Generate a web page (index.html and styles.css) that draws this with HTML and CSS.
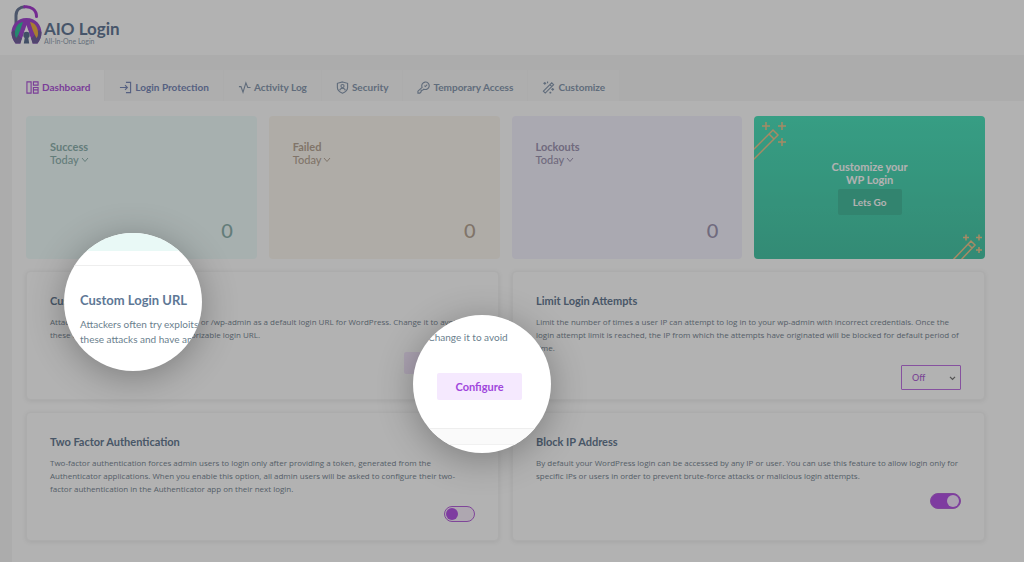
FILE: index.html
```html
<!DOCTYPE html>
<html lang="en">
<head>
<meta charset="utf-8">
<meta name="viewport" content="width=device-width, initial-scale=1">
<title>AIO Login</title>
<link rel="stylesheet" href="styles.css">
</head>
<body>
<div class="page">
  <header class="header">
    <svg class="logo" viewBox="0 0 31 40" aria-hidden="true">
      <path d="M5 19V10.500C5 5 9 2 14 1.800" fill="none" stroke="#6d7c9a" stroke-width="3"/>
      <path d="M13.500 1.800C20 1 25.500 5 25.500 11.500" fill="none" stroke="#a63ed0" stroke-width="3" stroke-linecap="round"/>
      <path d="M15.500 13C6 13 .5 20 .5 28c0 4 2 8 4 10.500h5L14 25h3l4.500 13.500h5c2-2.500 4-6.500 4-10.500 0-8-5.500-15-15-15z" fill="#a449d2"/>
      <path d="M.5 27c0 5 2 9 4 11.500h5L11 34 3 25zM30.500 27c0 5-2 9-4 11.500h-5L20 34l8-9z" fill="#75649f"/>
      <path d="M12 17c-5 1-8 5-8 11 0 2 0 3 1.500 5 3-5 4.500-10 6.500-16z" fill="#35c49e"/>
      <path d="M19 17c5 1 8 5 8 11 0 2 0 3-1.500 5-3-5-4.500-10-6.500-16z" fill="#f0b445"/>
      <path d="M15.500 20 9.500 38.500h12z" fill="#fff"/>
      <circle cx="15.500" cy="30" r="3.200" fill="#5d7192"/>
      <path d="M14 31h3l1.200 7.500h-5.400z" fill="#5d7192"/>
    </svg>
    <div class="brand"><strong class="brand-name">AIO Login</strong><span class="brand-sub">All-In-One Login</span></div>
  </header>

  <main class="main">
    <nav class="tabs" aria-label="Sections">
      <a class="tab tab-active" href="#"><svg class="icon" viewBox="0 0 14 14"><path d="M1 1h4.500v12H1zM8 1h5v3.500H8zM8 7h5v6H8zM8 9.500h5"/></svg>Dashboard</a>
      <a class="tab tab-strong" href="#"><svg class="icon" viewBox="0 0 14 14"><path d="M7.500 1.500h5v11h-5M1 7h8M6.500 4.500 9 7 6.500 9.500"/></svg>Login Protection</a>
      <a class="tab" href="#"><svg class="icon" viewBox="0 0 14 14"><path d="M1 6h2.200l2.200 6L8.500 2l2 5H13.500"/></svg>Activity Log</a>
      <a class="tab" href="#"><svg class="icon" viewBox="0 0 14 14"><path d="M7 1 12.500 2.500V7c0 3-2.500 5-5.500 6.200C4 12 1.500 10 1.500 7V2.500z"/><circle cx="7" cy="5.500" r="1.700"/><path d="M4 10c.5-3 5.500-3 6 0"/></svg>Security</a>
      <a class="tab" href="#"><svg class="icon" viewBox="0 0 14 14"><path d="M5.500 6.800a4 4 0 1 1 2 2L6 10H4.500v1.500L3 13H1v-2z"/><path d="m8 5 1 1 2-2"/></svg>Temporary Access</a>
      <a class="tab" href="#"><svg class="icon" viewBox="0 0 14 14"><path d="m1.500 11 9-9 2 2-9 9zM8.500 4l2 2M3 1v3M1.500 2.500h3M6 .5v2M11.500 7.500v3M10 9h3M9 11.500v2M8 12.500h2"/></svg>Customize</a>
    </nav>

    <div class="panel">
      <section class="stats" aria-label="Login statistics">
        <article class="stat stat-success"><h2 class="stat-title">Success</h2><button class="period" type="button">Today<svg class="chev" viewBox="0 0 8 6"><path d="m1 1 3 3.500L7 1"/></svg></button><p class="count">0</p></article>
        <article class="stat stat-failed"><h2 class="stat-title">Failed</h2><button class="period" type="button">Today<svg class="chev" viewBox="0 0 8 6"><path d="m1 1 3 3.500L7 1"/></svg></button><p class="count">0</p></article>
        <article class="stat stat-lockouts"><h2 class="stat-title">Lockouts</h2><button class="period" type="button">Today<svg class="chev" viewBox="0 0 8 6"><path d="m1 1 3 3.500L7 1"/></svg></button><p class="count">0</p></article>
        <article class="promo">
          <svg class="wand wand-top" viewBox="0 0 34 40" aria-hidden="true"><path d="m-5 33 24-24 5 5-27 27M15 13l5 5M12 1v8M8 5h8M28 1v8M24 5h8M28 17v8M24 21h8"/></svg>
          <h2 class="promo-title">Customize your<br>WP Login</h2>
          <button class="promo-button" type="button">Lets Go</button>
          <svg class="wand wand-bottom" viewBox="0 0 30 26" aria-hidden="true"><path d="m-1 28 19-20 4 4L6 29M15 11l4 4M13 1.500v6M10 4.500h6M26 1.500v6M23 4.500h6M26 14v6M23 17h6"/></svg>
        </article>
      </section>

      <section class="features" aria-label="Features">
        <article class="card"><h3 class="card-title">Custom Login URL</h3><p class="card-text">Attackers often try exploits on /wp-login or /wp-admin as a default login URL for WordPress. Change it to avoid<br>these attacks and have an easily memorizable login URL.</p><button class="configure" type="button">Configure</button></article>
        <article class="card"><h3 class="card-title"><label for="limit">Limit Login Attempts</label></h3><p class="card-text">Limit the number of times a user IP can attempt to log in to your wp-admin with incorrect credentials. Once the<br>login attempt limit is reached, the IP from which the attempts have originated will be blocked for default period of<br>time.</p>
          <span class="select-wrap"><select class="select" id="limit"><option>Off</option><option>On</option></select><svg class="select-chev" viewBox="0 0 8 6"><path d="m1 1 3 3 3-3"/></svg></span></article>
        <article class="card"><h3 class="card-title"><label for="twofactor">Two Factor Authentication</label></h3><p class="card-text">Two-factor authentication forces admin users to login only after providing a token, generated from the<br>Authenticator applications. When you enable this option, all admin users will be asked to configure their two-<br>factor authentication in the Authenticator app on their next login.</p><input class="toggle" id="twofactor" type="checkbox" role="switch"></article>
        <article class="card"><h3 class="card-title"><label for="blockip">Block IP Address</label></h3><p class="card-text">By default your WordPress login can be accessed by any IP or user. You can use this feature to allow login only for<br>specific IPs or users in order to prevent brute-force attacks or malicious login attempts.</p><input class="toggle" id="blockip" type="checkbox" role="switch" checked></article>
      </section>
    </div>
  </main>

  <div class="shade"></div>
  <div class="lens lens-title">
    <div class="lens-mint"></div>
    <div class="lens-card"><strong class="lens-heading">Custom Login URL</strong><p class="lens-text">Attackers often try exploits<br>these attacks and have an</p></div>
  </div>
  <div class="lens lens-action">
    <div class="lens-body"><p class="lens-text">Change it to avoid</p><button class="lens-button" type="button">Configure</button></div>
    <div class="lens-gap"></div>
  </div>
</div>
</body>
</html>
```
FILE: styles.css
```css
* { box-sizing: border-box; }
body { margin: 0; background: #f7f7f7; font-family: Lato, "Open Sans", sans-serif; font-size: 9px; color: #7a8995; }
h2, h3, p { margin: 0; }
button, select { font: inherit; color: inherit; border: 0; margin: 0; cursor: pointer; }
.page { position: relative; min-height: 100vh; display: flex; flex-direction: column; overflow: hidden; }

.header { display: flex; align-items: flex-start; gap: 2px; height: 55px; padding: 5px 11px; background: #fff; }
.logo { width: 31px; height: 40px; }
.brand { display: flex; flex-direction: column; padding-top: 15px; color: #667a98; }
.brand-name { font-size: 17px; line-height: 18px; }
.brand-sub { font-size: 7px; line-height: 6px; color: #939fb1; }

.main { flex: 1; display: flex; flex-direction: column; padding: 15px 0 0 12px; }
.tabs { display: flex; gap: 1px; }
.tab { display: flex; align-items: center; gap: 3px; height: 31px; padding: 3px 14px 0; background: #f9f9f9; color: #8a9bb1; font-size: 10px; font-weight: 700; text-decoration: none; }
.tab-active { background: #fff; color: #b058da; }
.tab-strong { color: #7b8bba; }
.icon { width: 13px; height: 13px; fill: none; stroke: currentColor; stroke-width: 1.2; }

.panel { flex: 1; padding: 15px 39px 22px 14px; background: #fff; }
.stats { display: grid; grid-template-columns: repeat(4, minmax(0, 1fr)); gap: 12px; }
.stat { display: flex; flex-direction: column; align-items: flex-start; height: 143px; padding: 24px 24px 15px; border-radius: 4px; }
.stat-success { background: #f0fcfb; color: #8fb3af; }
.stat-failed { background: #fbf7f0; color: #b8a797; }
.stat-lockouts { background: #f4f2fe; color: #a198b4; }
.stat-title { font-size: 11px; line-height: 13px; font-weight: 700; }
.period { display: flex; align-items: center; gap: 2px; padding: 0; background: none; font-size: 11px; line-height: 13px; font-weight: 500; }
.chev { width: 8px; height: 6px; fill: none; stroke: currentColor; }
.count { align-self: flex-end; margin-top: auto; font-size: 20px; line-height: 28px; font-weight: 500; }
.promo { position: relative; display: flex; flex-direction: column; align-items: center; justify-content: center; gap: 3px; height: 143px; border-radius: 4px; overflow: hidden; background: linear-gradient(#4fe2bd, #4ac7a8); color: #fff; text-align: center; }
.promo-title { font-size: 11px; line-height: 13px; }
.promo-button { width: 64px; height: 26px; border-radius: 2px; background: #48bd9f; font-size: 10px; font-weight: 700; }
.wand { position: absolute; fill: none; stroke: #efc690; stroke-width: 1.5; }
.wand-top { top: 5px; left: 0; width: 34px; height: 40px; }
.wand-bottom { right: 2px; bottom: 0; width: 30px; height: 26px; }

.features { display: grid; grid-template-columns: repeat(2, minmax(0, 1fr)); gap: 12px 13px; margin-top: 12px; }
.card { display: flex; flex-direction: column; align-items: flex-start; min-height: 129px; padding: 22px 23px 8px; border: 1px solid #f6f6f6; border-radius: 4px; background: #fff; box-shadow: 0 1px 5px rgba(0, 0, 0, 0.08); }
.card-title { font-size: 11px; line-height: 13px; color: #687c94; }
.card-text { margin: 8px 0 11px; font-family: "Open Sans", sans-serif; font-size: 8px; line-height: 13px; white-space: nowrap; }
.configure { align-self: flex-end; width: 71px; height: 22px; border-radius: 2px; background: #f5e9fe; color: #a046dc; font-weight: 700; }
.select-wrap { position: relative; align-self: flex-end; }
.select { display: block; appearance: none; width: 60px; height: 25px; padding: 0 20px 0 10px; border: 1px solid #c075e4; border-radius: 1px; background: #fff; color: #b065d6; font-weight: 500; }
.select-chev { position: absolute; right: 5px; top: 11px; width: 7px; height: 5px; fill: none; stroke: #777; stroke-width: 1.5; pointer-events: none; }
.toggle { appearance: none; align-self: flex-end; display: flex; align-items: center; width: 31px; height: 16px; margin: 0; padding: 1px; border: 1px solid #b765dc; border-radius: 8px; background: #f9f0fd; }
.toggle::before { content: ""; width: 12px; height: 12px; border-radius: 50%; background: #b555e6; }
.toggle:checked { justify-content: flex-end; background: #b555e6; }
.toggle:checked::before { background: #f5e9fe; }

.shade { position: absolute; inset: 0; background: rgba(0, 0, 0, 0.3); pointer-events: none; }
.lens { position: absolute; width: 138px; height: 138px; border-radius: 50%; overflow: hidden; background: #fff; box-shadow: 0 6px 36px rgba(0, 0, 0, 0.3); white-space: nowrap; }
.lens-title { left: 64px; top: 233px; }
.lens-action { left: 413px; top: 315px; }
.lens-mint { height: 18px; background: #e9f9f6; }
.lens-card { margin-top: 14px; padding: 26px 0 0 16px; border-top: 1px solid #eee; }
.lens-heading { display: block; font-size: 13px; line-height: 16px; color: #5e7896; }
.lens-text { font-size: 10px; line-height: 15px; color: #6b7f8e; }
.lens-card .lens-text { margin-top: 9px; }
.lens-body { display: flex; flex-direction: column; gap: 28px; height: 114px; padding: 15px 0 0 15px; border-bottom: 1px solid #eee; }
.lens-button { width: 85px; height: 27px; margin-left: 9px; border-radius: 2px; background: #f5e9fe; color: #a046dc; font-size: 11px; font-weight: 700; }
.lens-gap { height: 16px; border-bottom: 1px solid #f1f1f1; background: #fafafa; }
```
